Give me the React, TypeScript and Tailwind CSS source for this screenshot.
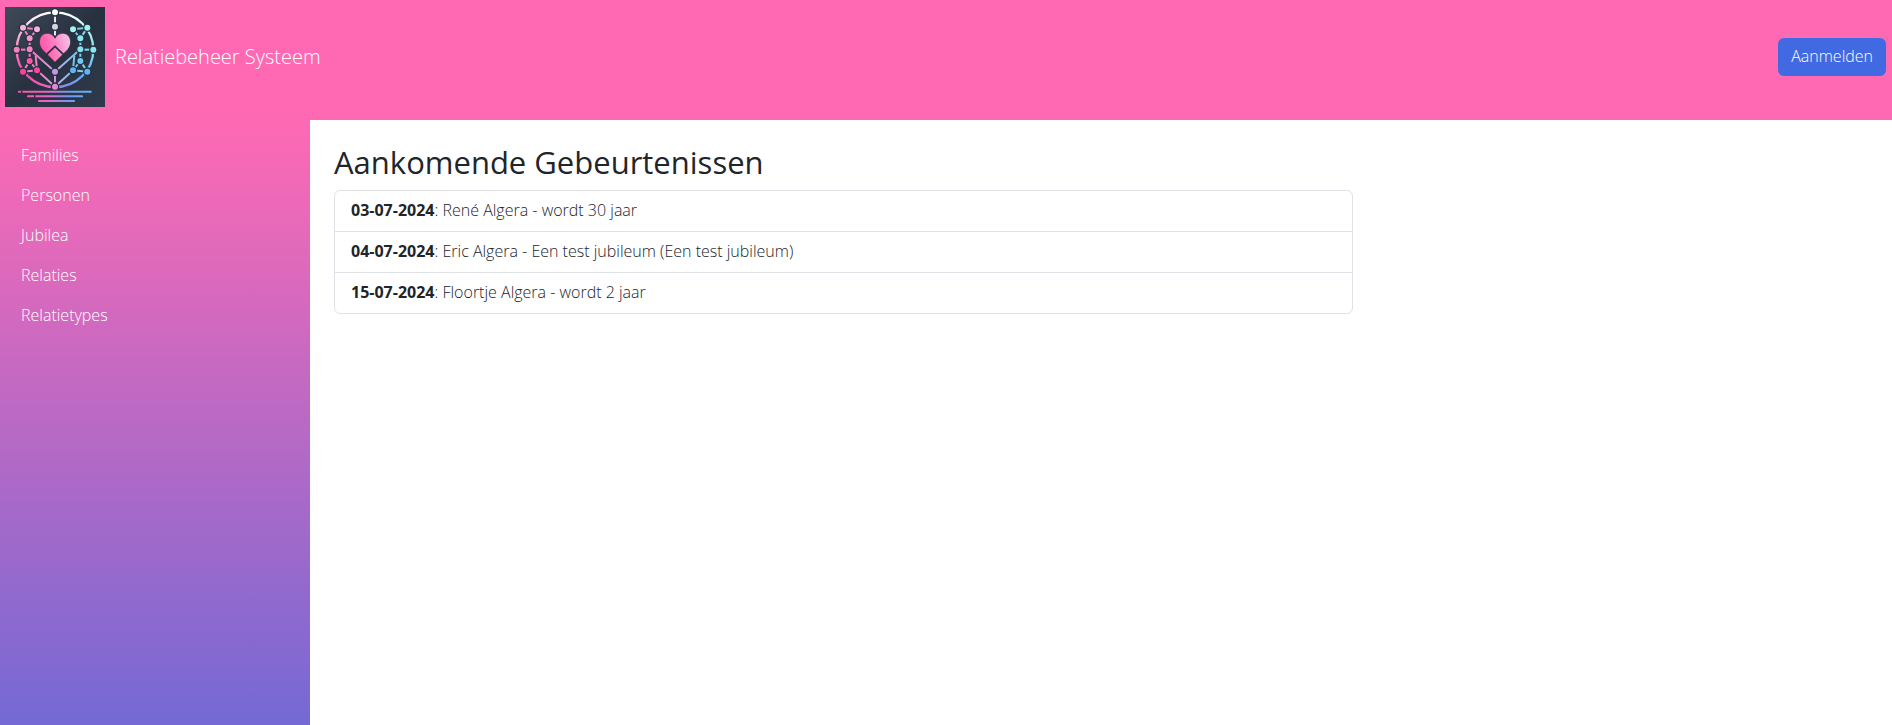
const nodes: { x: number; y: number; fill: string }[] = [
  { x: 165, y: 37, fill: "#ffffff" },
  { x: 165, y: 80, fill: "#d9d3e0" },
  { x: 69, y: 83, fill: "#f3b4dc" },
  { x: 111, y: 88, fill: "#f2b3dc" },
  { x: 89, y: 115, fill: "#ee97cf" },
  { x: 50, y: 149, fill: "#f77fc0" },
  { x: 89, y: 148, fill: "#f584c4" },
  { x: 89, y: 183, fill: "#ff55ac" },
  { x: 69, y: 215, fill: "#ff3f9f" },
  { x: 111, y: 211, fill: "#f8479f" },
  { x: 165, y: 215, fill: "#c795e0" },
  { x: 165, y: 260, fill: "#e088d8" },
  { x: 219, y: 88, fill: "#a5f3ee" },
  { x: 262, y: 83, fill: "#9af5f0" },
  { x: 241, y: 115, fill: "#84eaed" },
  { x: 280, y: 149, fill: "#8be4f2" },
  { x: 241, y: 148, fill: "#84e2ee" },
  { x: 241, y: 183, fill: "#6fc9ee" },
  { x: 219, y: 211, fill: "#62b4f0" },
  { x: 262, y: 215, fill: "#62b4f5" },
];

const links = [
  "M69 83L111 88L89 115L69 83",
  "M89 115V183",
  "M50 149H89",
  "M89 183L69 215L111 211L89 183",
  "M111 211L107 166",
  "M89 148L165 215L241 148",
  "M165 215V260",
  "M111 211L165 260L219 211",
  "M262 83L219 88L241 115L262 83",
  "M241 115V183",
  "M280 149H241",
  "M241 183L262 215L219 211L241 183",
  "M219 211L223 166",
];

function Logo() {
  return (
    <svg viewBox="15 21 300 300" className="size-[100px] shrink-0" role="img" aria-label="Logo">
      <defs>
        <linearGradient id="sky" x1="0" y1="0" x2="1" y2="1">
          <stop offset="0" stopColor="#3f4a59" />
          <stop offset="0.5" stopColor="#283140" />
          <stop offset="1" stopColor="#2f3a4c" />
        </linearGradient>
        <linearGradient id="left" gradientUnits="userSpaceOnUse" x1="0" y1="37" x2="0" y2="262">
          <stop offset="0" stopColor="#ffffff" />
          <stop offset="0.25" stopColor="#f3bfe0" />
          <stop offset="0.55" stopColor="#f880c2" />
          <stop offset="0.8" stopColor="#ff3f9f" />
          <stop offset="1" stopColor="#f264c0" />
        </linearGradient>
        <linearGradient id="right" gradientUnits="userSpaceOnUse" x1="0" y1="37" x2="0" y2="262">
          <stop offset="0" stopColor="#ffffff" />
          <stop offset="0.25" stopColor="#a4f5ee" />
          <stop offset="0.55" stopColor="#7fdff0" />
          <stop offset="0.85" stopColor="#5aa5f5" />
          <stop offset="1" stopColor="#8e8bee" />
        </linearGradient>
        <linearGradient id="web" gradientUnits="userSpaceOnUse" x1="50" y1="0" x2="280" y2="0">
          <stop offset="0" stopColor="#f77fc0" />
          <stop offset="0.3" stopColor="#ea80c6" />
          <stop offset="0.5" stopColor="#cba6e2" />
          <stop offset="0.75" stopColor="#76c4ee" />
          <stop offset="1" stopColor="#84e6ee" />
        </linearGradient>
        <linearGradient id="bars" gradientUnits="userSpaceOnUse" x1="55" y1="0" x2="275" y2="0">
          <stop offset="0" stopColor="#ff4fa8" />
          <stop offset="0.4" stopColor="#e667c4" />
          <stop offset="0.7" stopColor="#6b9bf5" />
          <stop offset="1" stopColor="#63b8f0" />
        </linearGradient>
        <linearGradient id="heart" x1="0" y1="0.5" x2="1" y2="0.2">
          <stop offset="0" stopColor="#ff4fa8" />
          <stop offset="0.45" stopColor="#ff7cc0" />
          <stop offset="1" stopColor="#f5c6ea" />
        </linearGradient>
      </defs>
      <rect x="15" y="21" width="300" height="300" fill="url(#sky)" />
      <g fill="none" strokeWidth="7">
        <path d="M165 37A115 112 0 0 0 165 261" stroke="url(#left)" />
        <path d="M165 37A115 112 0 0 1 165 261" stroke="url(#right)" />
      </g>
      <g fill="none" stroke="url(#web)" strokeWidth="6">
        {links.map((d) => (
          <path key={d} d={d} />
        ))}
      </g>
      <rect x="162" y="40" width="6" height="66" fill="#e9e6ee" />
      <rect x="162" y="216" width="6" height="44" fill="#d38fdc" />
      <path
        d="M165 187L127 149C114 134 116 111 130 103C143 96 159 102 165 115C171 102 187 96 200 103C214 111 216 134 203 149Z"
        fill="url(#heart)"
        stroke="#283140"
        strokeWidth="2"
      />
      <path d="M136 167L165 139L194 167" fill="none" stroke="#283140" strokeWidth="5" />
      <g stroke="#263040" strokeWidth="4">
        {nodes.map((n) => (
          <circle key={`${n.x}-${n.y}`} cx={n.x} cy={n.y} r="11" fill={n.fill} />
        ))}
      </g>
      <g fill="url(#bars)">
        <rect x="54" y="272" width="221" height="6" rx="2" />
        <rect x="81" y="286" width="168" height="6" rx="2" />
        <rect x="114" y="300" width="111" height="6" rx="2" />
      </g>
      <path d="M65 271V279M104 285V293" stroke="#283140" strokeWidth="4" />
    </svg>
  );
}

const menu = ["Families", "Personen", "Jubilea", "Relaties", "Relatietypes"];

const events = [
  { date: "03-07-2024", text: "René Algera - wordt 30 jaar" },
  { date: "04-07-2024", text: "Eric Algera - Een test jubileum (Een test jubileum)" },
  { date: "15-07-2024", text: "Floortje Algera - wordt 2 jaar" },
];

export default function App() {
  return (
    <div className="flex min-h-screen flex-col bg-white font-['Open_Sans','Noto_Sans',sans-serif] text-base text-[#212529]">
      <header className="flex items-center justify-between bg-[#ff69b4] pt-[7px] pr-1.5 pb-[13px] pl-[5px]">
        <a href="#" className="flex items-center gap-2.5 text-xl font-light text-white">
          <Logo />
          Relatiebeheer Systeem
        </a>
        <button type="button" className="rounded-md bg-[#4169e1] px-[13px] pt-1.5 pb-2 leading-6 font-light text-white">
          Aanmelden
        </button>
      </header>
      <div className="flex grow">
        <nav className="w-[310px] shrink-0 bg-linear-to-b/srgb from-[#ff69b4] to-[#4169e1] to-[137%] px-[21px] py-[15px]">
          <ul>
            {menu.map((item) => (
              <li key={item}>
                <a href="#" className="block py-2 leading-6 font-light text-white">
                  {item}
                </a>
              </li>
            ))}
          </ul>
        </nav>
        <main className="grow py-6 pr-[30px] pl-6">
          <h2 className="mb-2.5 text-[31px] leading-9">Aankomende Gebeurtenissen</h2>
          <ul className="w-2/3 divide-y divide-[#dee2e6] rounded-md border border-[#dee2e6]">
            {events.map((event) => (
              <li key={event.date} className="px-4 pt-[7px] pb-[9px] leading-6 font-light">
                <strong className="font-bold">{event.date}</strong>: {event.text}
              </li>
            ))}
          </ul>
        </main>
      </div>
    </div>
  );
}
